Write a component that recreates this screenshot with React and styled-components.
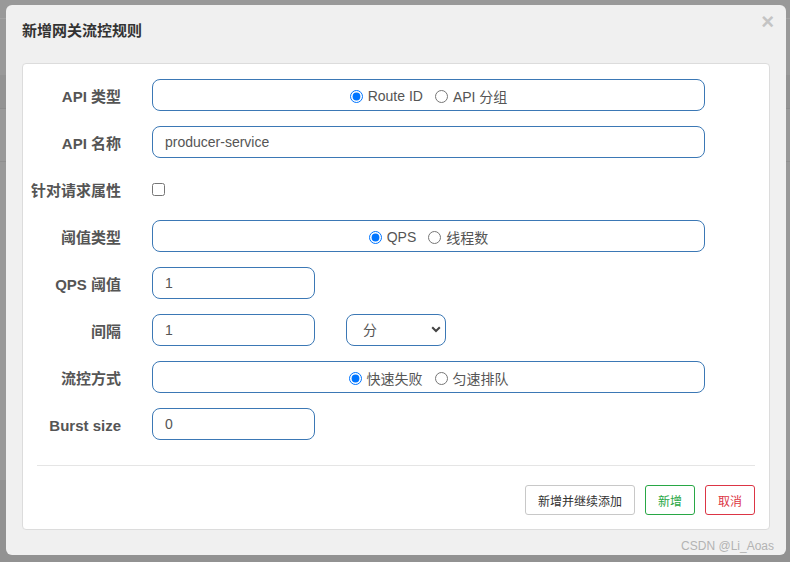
import styled, { createGlobalStyle } from "styled-components";

const GlobalStyle = createGlobalStyle`
  html, body {
    margin: 0;
    padding: 0;
  }
  body {
    width: 790px;
    height: 562px;
    overflow: hidden;
    font-family: "Liberation Sans", Arial, "Noto Sans CJK SC", sans-serif;
    background:
      linear-gradient(
        to bottom,
        #999 0, #999 18px, #a3a3a3 18px, #a3a3a3 19px,
        #999 19px, #999 75px, #939393 75px, #939393 108px,
        #8c8c8c 108px, #8c8c8c 109px, #999 109px, #999 161px,
        #8f8f8f 161px, #8f8f8f 162px, #999 162px, #999 480px,
        #929292 480px
      );
  }
`;

const Stage = styled.div`
  padding: 5px 4px 7px 6px;
  box-sizing: border-box;
  width: 790px;
  height: 562px;
`;

const Modal = styled.div`
  position: relative;
  height: 550px;
  background: #f0f0f0;
  border-radius: 6px;
  display: flex;
  flex-direction: column;
`;

const Header = styled.div`
  display: flex;
  justify-content: space-between;
  align-items: flex-start;
  height: 58px;
  padding: 16px 12px 0 16px;
  box-sizing: border-box;
`;

const Title = styled.h4`
  margin: 0;
  font-size: 15px;
  line-height: 20px;
  font-weight: bold;
  color: #333;
`;

const Close = styled.button`
  border: 0;
  background: transparent;
  padding: 0;
  margin-top: -10px;
  font-family: "Liberation Sans", Arial, sans-serif;
  font-size: 22px;
  font-weight: bold;
  line-height: 1;
  color: #c4c4c4;
  cursor: pointer;
`;

const Panel = styled.div`
  margin: 0 16px;
  background: #fff;
  border: 1px solid #dcdcdc;
  border-radius: 4px;
  height: 467px;
  box-sizing: border-box;
  display: flex;
  flex-direction: column;
`;

const Form = styled.div`
  display: grid;
  grid-template-columns: 98px 1fr;
  column-gap: 31px;
  row-gap: 15px;
  padding: 15px 64px 0 0;
`;

const Label = styled.label`
  text-align: right;
  font-size: 15px;
  font-weight: bold;
  line-height: 20px;
  padding-top: 8px;
  color: #555;
  white-space: nowrap;
`;

const Field = styled.div`
  display: flex;
  align-items: center;
  gap: 31px;
  height: 32px;
`;

const RadioBox = styled.div`
  flex: 1;
  height: 32px;
  box-sizing: border-box;
  border: 1px solid #3b78b5;
  border-radius: 8px;
  display: flex;
  justify-content: center;
  align-items: center;
  gap: 12px;
  padding: 2px 0 0 0;
`;

const RadioLabel = styled.label`
  display: inline-flex;
  align-items: center;
  gap: 5px;
  font-size: 14px;
  color: #555;
  white-space: nowrap;

  input {
    margin: 0;
    width: 13px;
    height: 13px;
  }
`;

const TextInput = styled.input`
  width: ${(p) => p.$width || "100%"};
  height: 32px;
  box-sizing: border-box;
  border: 1px solid #3b78b5;
  border-radius: 8px;
  padding: 0 12px;
  font-family: inherit;
  font-size: 14px;
  color: #555;
  outline: none;
`;

const CheckBox = styled.input`
  margin: 0;
  width: 13px;
  height: 13px;
`;

const SelectWrap = styled.div`
  position: relative;
  width: 100px;
  height: 32px;
`;

const Select = styled.select`
  appearance: none;
  width: 100%;
  height: 32px;
  box-sizing: border-box;
  border: 1px solid #3b78b5;
  border-radius: 8px;
  padding: 0 16px;
  font-family: inherit;
  font-size: 14px;
  color: #555;
  background: #fff;
  outline: none;
`;

const Chevron = styled.svg`
  position: absolute;
  right: 5px;
  top: 12px;
  pointer-events: none;
`;

const Divider = styled.hr`
  margin: 25px 14px 0 14px;
  border: 0;
  border-top: 1px solid #e5e5e5;
`;

const Footer = styled.div`
  display: flex;
  justify-content: flex-end;
  gap: 10px;
  padding: 19px 14px 0;
`;

const tones = {
  default: { border: "#c8c8c8", color: "#333" },
  success: { border: "#28a745", color: "#28a745" },
  danger: { border: "#dc3545", color: "#dc3545" },
};

const Button = styled.button`
  height: 30px;
  padding: 0 12px;
  min-width: 50px;
  background: #fff;
  border: 1px solid ${(p) => tones[p.$tone].border};
  color: ${(p) => tones[p.$tone].color};
  border-radius: 3px;
  font-family: "Liberation Sans", Arial, "Noto Sans CJK SC", sans-serif;
  font-size: 12px;
  cursor: pointer;
`;

const Watermark = styled.span`
  position: absolute;
  right: 12px;
  bottom: 2px;
  font-size: 12px;
  color: #b3b3b3;
`;

function Radios({ name, options, checked }) {
  return (
    <RadioBox>
      {options.map((o) => (
        <RadioLabel key={o}>
          <input type="radio" name={name} defaultChecked={o === checked} />
          {o}
        </RadioLabel>
      ))}
    </RadioBox>
  );
}

export default function App() {
  return (
    <>
      <GlobalStyle />
      <Stage>
        <Modal>
          <Header>
            <Title>新增网关流控规则</Title>
            <Close>×</Close>
          </Header>
          <Panel>
            <Form>
              <Label>API 类型</Label>
              <Field>
                <Radios name="apiType" options={["Route ID", "API 分组"]} checked="Route ID" />
              </Field>

              <Label>API 名称</Label>
              <Field>
                <TextInput defaultValue="producer-service" />
              </Field>

              <Label>针对请求属性</Label>
              <Field>
                <CheckBox type="checkbox" />
              </Field>

              <Label>阈值类型</Label>
              <Field>
                <Radios name="grade" options={["QPS", "线程数"]} checked="QPS" />
              </Field>

              <Label>QPS 阈值</Label>
              <Field>
                <TextInput $width="163px" defaultValue="1" />
              </Field>

              <Label>间隔</Label>
              <Field>
                <TextInput $width="163px" defaultValue="1" />
                <SelectWrap>
                  <Select defaultValue="分">
                    <option>秒</option>
                    <option>分</option>
                    <option>时</option>
                    <option>天</option>
                  </Select>
                  <Chevron width="10" height="7" viewBox="0 0 10 7">
                    <path d="M1.2 1.2 L5 5 L8.8 1.2" fill="none" stroke="#444" strokeWidth="2" />
                  </Chevron>
                </SelectWrap>
              </Field>

              <Label>流控方式</Label>
              <Field>
                <Radios name="behavior" options={["快速失败", "匀速排队"]} checked="快速失败" />
              </Field>

              <Label>Burst size</Label>
              <Field>
                <TextInput $width="163px" defaultValue="0" />
              </Field>
            </Form>
            <Divider />
            <Footer>
              <Button $tone="default">新增并继续添加</Button>
              <Button $tone="success">新增</Button>
              <Button $tone="danger">取消</Button>
            </Footer>
          </Panel>
          <Watermark>CSDN @Li_Aoas</Watermark>
        </Modal>
      </Stage>
    </>
  );
}
